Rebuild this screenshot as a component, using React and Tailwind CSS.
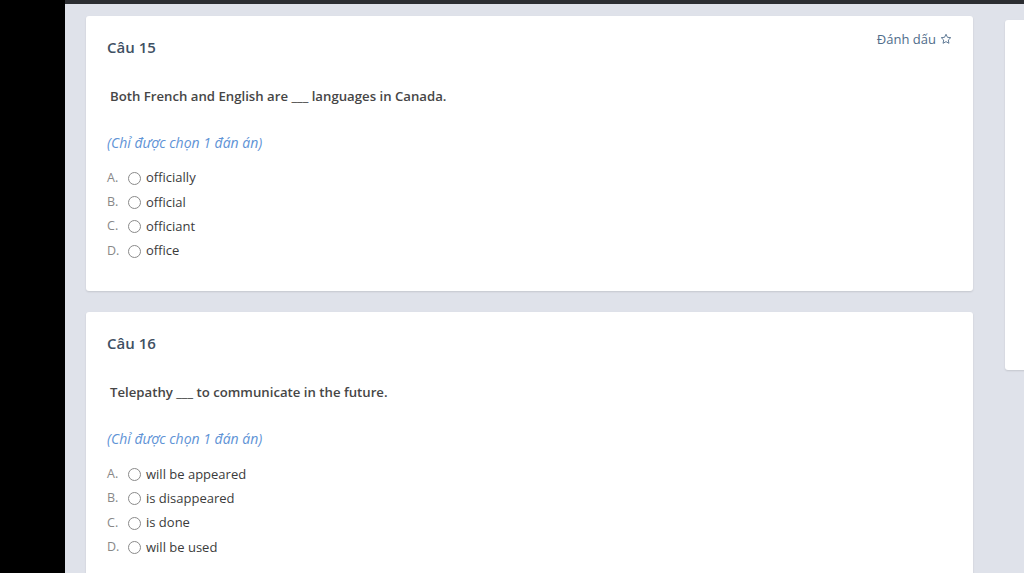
import React from "react";

const Star = () => (
  <svg width="12" height="12" viewBox="0 0 24 24" fill="none" stroke="currentColor" strokeWidth="1.8" strokeLinejoin="round" className="inline-block ml-[4px] -mt-[3px]">
    <path d="M12 2.5l2.9 6.1 6.6.8-4.9 4.6 1.3 6.6L12 17.3l-5.9 3.3 1.3-6.6-4.9-4.6 6.6-.8z" />
  </svg>
);

function Card({ num, question, options, mark }) {
  return (
    <div className="bg-white rounded-[3px] shadow-[0_1px_2px_rgba(0,0,0,0.12)] px-[21px] pt-[15px] pb-[28px]">
      <div className="flex justify-between items-start">
        <div className="mt-[6px] leading-[20px] text-[15px] font-semibold text-[#405063]">Câu {num}</div>
        {mark && (
          <div className="leading-[16px] text-[13px] text-[#4f6c8a]">
            Đánh dấu<Star />
          </div>
        )}
      </div>
      <div className="mt-[29px] pl-[3px] leading-[20px] text-[13.2px] font-semibold text-[#464646]">{question}</div>
      <div className="mt-[27px] pl-[0px] leading-[20px] text-[14px] italic text-[#6093d6]">(Chỉ được chọn 1 đán án)</div>
      <div className="mt-[13px] flex flex-col">
        {options.map((o, i) => (
          <div key={i} className="h-[24.33px] flex items-center text-[13px]">
            <span className="w-[21px] text-[#888888] text-[12.5px]">{"ABCD"[i]}.</span>
            <span className="w-[13px] h-[13px] rounded-full border border-[#8a8a8a] mr-[5px] shrink-0"></span>
            <span className="text-[#3b3b3b]">{o}</span>
          </div>
        ))}
      </div>
    </div>
  );
}

export default function App() {
  return (
    <div className="w-[1024px] h-[573px] overflow-hidden flex bg-black" style={{ fontFamily: '"Open Sans", "Noto Sans", sans-serif' }}>
      <div className="w-[65px] shrink-0 bg-black"></div>
      <div className="flex-1 flex flex-col bg-[#dfe2ea] overflow-hidden">
        <div className="h-[4px] bg-[#2b2d31] shrink-0"></div>
        <div className="flex pl-[21px] pt-[12px]">
          <div className="w-[887px] shrink-0 flex flex-col gap-[21px]">
            <Card
              num={15}
              mark
              question={<>Both French and English are ___ languages in Canada.</>}
              options={["officially", "official", "officiant", "office"]}
            />
            <Card
              num={16}
              question={<>Telepathy ___ to communicate in the future.</>}
              options={["will be appeared", "is disappeared", "is done", "will be used"]}
            />
          </div>
          <div className="ml-[32px] mt-[4px] w-[40px] h-[350px] shrink-0 bg-white rounded-[3px] shadow-[0_1px_2px_rgba(0,0,0,0.12)]"></div>
        </div>
      </div>
    </div>
  );
}
